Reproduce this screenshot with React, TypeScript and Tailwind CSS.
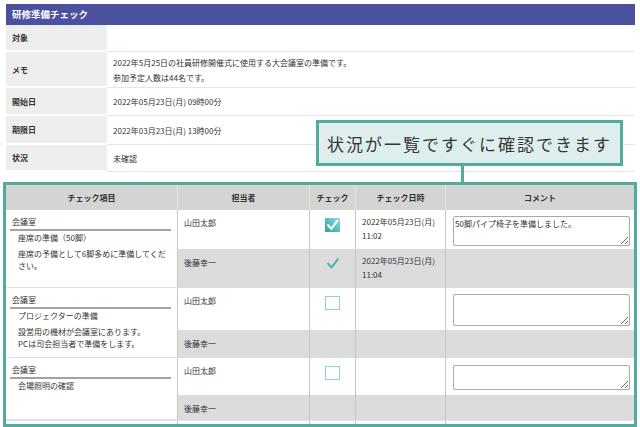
import React from "react";

function CheckedBox() {
  return (
    <svg width="15" height="14" viewBox="0 0 15 14">
      <defs>
        <linearGradient id="cbg" x1="0" y1="1" x2="1" y2="0">
          <stop offset="0" stopColor="#2aa596" />
          <stop offset="1" stopColor="#8ed8ea" />
        </linearGradient>
      </defs>
      <rect x="0" y="0" width="15" height="14" fill="url(#cbg)" />
      <path d="M3.2 7.2 L6.3 10.8 L12.3 2.6" stroke="#ffffff" strokeWidth="2.2" fill="none" strokeLinecap="round" strokeLinejoin="round" />
    </svg>
  );
}

function CheckMark() {
  return (
    <svg width="12" height="11" viewBox="0 0 12 11">
      <path d="M1.2 5.6 L4.6 9.6 L10.8 1.2" stroke="#45b4ab" strokeWidth="2" fill="none" strokeLinecap="round" strokeLinejoin="round" />
    </svg>
  );
}

function EmptyBox() {
  return <div className="w-[15px] h-[14px] border border-[#86d2e2] bg-white" />;
}

type Item = {
  rows: string;
  desc: string[][];
  a: { check: "box" | "empty"; date?: [string, string]; comment?: string; taTop: string; taH: string };
  b: { check: "mark" | "none"; date?: [string, string] };
};

const items: Item[] = [
  {
    rows: "grid-rows-[39px_39px]",
    desc: [["座席の準備（50脚）"], ["座席の予備として6脚多めに準備してください。"]],
    a: { check: "box", date: ["2022年05月23日(月)", "11:02"], comment: "50脚パイプ椅子を準備しました。", taTop: "mt-[6px]", taH: "h-[30px]" },
    b: { check: "mark", date: ["2022年05月23日(月)", "11:04"] },
  },
  {
    rows: "grid-rows-[42px_28px]",
    desc: [["プロジェクターの準備"], ["設営用の機材が会議室にあります。", "PCは司会担当者で準備をします。"]],
    a: { check: "empty", taTop: "mt-[6px]", taH: "h-[32px]" },
    b: { check: "none" },
  },
  {
    rows: "grid-rows-[37px_25px]",
    desc: [["会場照明の確認"]],
    a: { check: "empty", taTop: "mt-[7px]", taH: "h-[25px]" },
    b: { check: "none" },
  },
];

export default function App() {
  const info: { label: string; h: string; lines: string[] }[] = [
    { label: "対象", h: "h-[27px]", lines: [] },
    { label: "メモ", h: "h-[36px]", lines: ["2022年5月25日の社員研修開催式に使用する大会議室の準備です。", "参加予定人数は44名です。"] },
    { label: "開始日", h: "h-[28px]", lines: ["2022年05月23日(月) 09時00分"] },
    { label: "期限日", h: "h-[29px]", lines: ["2022年03月23日(月) 13時00分"] },
    { label: "状況", h: "h-[27px]", lines: ["未確認"] },
  ];

  return (
    <div className="relative w-[640px] h-[427px] overflow-hidden bg-white text-[#333333] font-['Noto_Sans_CJK_JP','Noto_Sans',sans-serif] text-[8px] leading-[13px]">
      <div className="ml-[6px] mr-[5px] pt-[4px]">
        <div className="h-[21px] bg-[#4b519d] text-white font-bold text-[9.5px] flex items-center pl-[6px]">
          研修準備チェック
        </div>
        {info.map((r) => (
          <div key={r.label} className={`flex ${r.h}`}>
            <div className="w-[101px] bg-[#eeeeee] border-b-2 border-white pl-[6px] flex items-center font-bold">
              {r.label}
            </div>
            <div className="flex-1 border-b border-[#e6e6e6] pl-[6px] flex flex-col justify-center leading-[15px]">
              {r.lines.map((l) => (
                <div key={l}>{l}</div>
              ))}
            </div>
          </div>
        ))}
      </div>

      <div className="mt-[10px] mx-[3px] h-[245px] border-[3px] border-[#52ab9d] overflow-hidden">
        <div className="grid grid-cols-[172px_132px_46px_90px_188px] h-[25px] bg-[#d4d4d4] font-bold">
          <div className="flex items-center justify-center border-r border-[#e4e4e4]">チェック項目</div>
          <div className="flex items-center justify-center border-r border-[#e4e4e4]">担当者</div>
          <div className="flex items-center justify-center border-r border-[#e4e4e4]">チェック</div>
          <div className="flex items-center justify-center border-r border-[#e4e4e4]">チェック日時</div>
          <div className="flex items-center justify-center">コメント</div>
        </div>

        {items.map((it, i) => (
          <div key={i} className={`grid grid-cols-[172px_132px_46px_90px_188px] ${it.rows}`}>
            <div className="row-span-2 border-r border-b border-r-[#c6c6c6] border-b-[#e2e2e2] pl-[6px] pr-[6px] pt-[5px]">
              <div>会議室</div>
              <div className="mt-[1px] -ml-[2px] h-[2px] bg-[#a3a3a3]" />
              <div className="pl-[6px] pr-[2px] flex flex-col gap-[3px] mt-[1px]">
                {it.desc.map((p, k) => (
                  <div key={k} className="leading-[12.5px]">
                    {p.map((l, m) => (
                      <div key={m}>{l}</div>
                    ))}
                  </div>
                ))}
              </div>
            </div>
            {/* sub-row a */}
            <div className="border-r border-[#c6c6c6] pl-[6px] pt-[6px]">山田太郎</div>
            <div className="border-r border-[#c6c6c6] flex justify-center pt-[8px]">
              {it.a.check === "box" ? <CheckedBox /> : <EmptyBox />}
            </div>
            <div className="border-r border-[#c6c6c6] pl-[6px] pt-[5px] leading-[14px] whitespace-nowrap">
              {it.a.date && (
                <>
                  <div>{it.a.date[0]}</div>
                  <div>{it.a.date[1]}</div>
                </>
              )}
            </div>
            <div className="pl-[7px] pr-[4px]">
              <textarea
                readOnly
                defaultValue={it.a.comment ?? ""}
                className={`block w-full ${it.a.taTop} ${it.a.taH} border border-[#a9a9a9] rounded-[2px] bg-white px-[1px] py-[1px] text-[8px] leading-[12px] text-[#333333] font-['Noto_Sans_CJK_JP','Noto_Sans',sans-serif] outline-none`}
              />
            </div>
            {/* sub-row b */}
            <div className="bg-[#dcdcdc] border-r border-[#c6c6c6] pl-[6px] pt-[7px]">後藤幸一</div>
            <div className="bg-[#dcdcdc] border-r border-[#c6c6c6] flex justify-center pt-[9px]">
              {it.b.check === "mark" ? <CheckMark /> : null}
            </div>
            <div className="bg-[#dcdcdc] border-r border-[#c6c6c6] pl-[6px] pt-[5px] leading-[14px] whitespace-nowrap">
              {it.b.date && (
                <>
                  <div>{it.b.date[0]}</div>
                  <div>{it.b.date[1]}</div>
                </>
              )}
            </div>
            <div className="bg-[#dcdcdc]" />
          </div>
        ))}
        <div className="grid grid-cols-[172px_132px_46px_90px_188px] h-[20px] border-t border-[#e2e2e2]">
          <div className="border-r border-[#c6c6c6]" />
          <div className="border-r border-[#c6c6c6]" />
          <div className="border-r border-[#c6c6c6]" />
          <div className="border-r border-[#c6c6c6]" />
          <div />
        </div>
      </div>

      {/* callout */}
      <div className="absolute left-[316px] top-[120px] w-[307px] h-[46px] border-[3px] border-[#52ab9d] bg-[#deeeed] flex items-center justify-center text-[17px] leading-none tracking-[2px] text-[#363636]">
        状況が一覧ですぐに確認できます
      </div>
      <div className="absolute left-[461px] top-[166px] w-[3px] h-[16px] bg-[#52ab9d]" />
    </div>
  );
}
